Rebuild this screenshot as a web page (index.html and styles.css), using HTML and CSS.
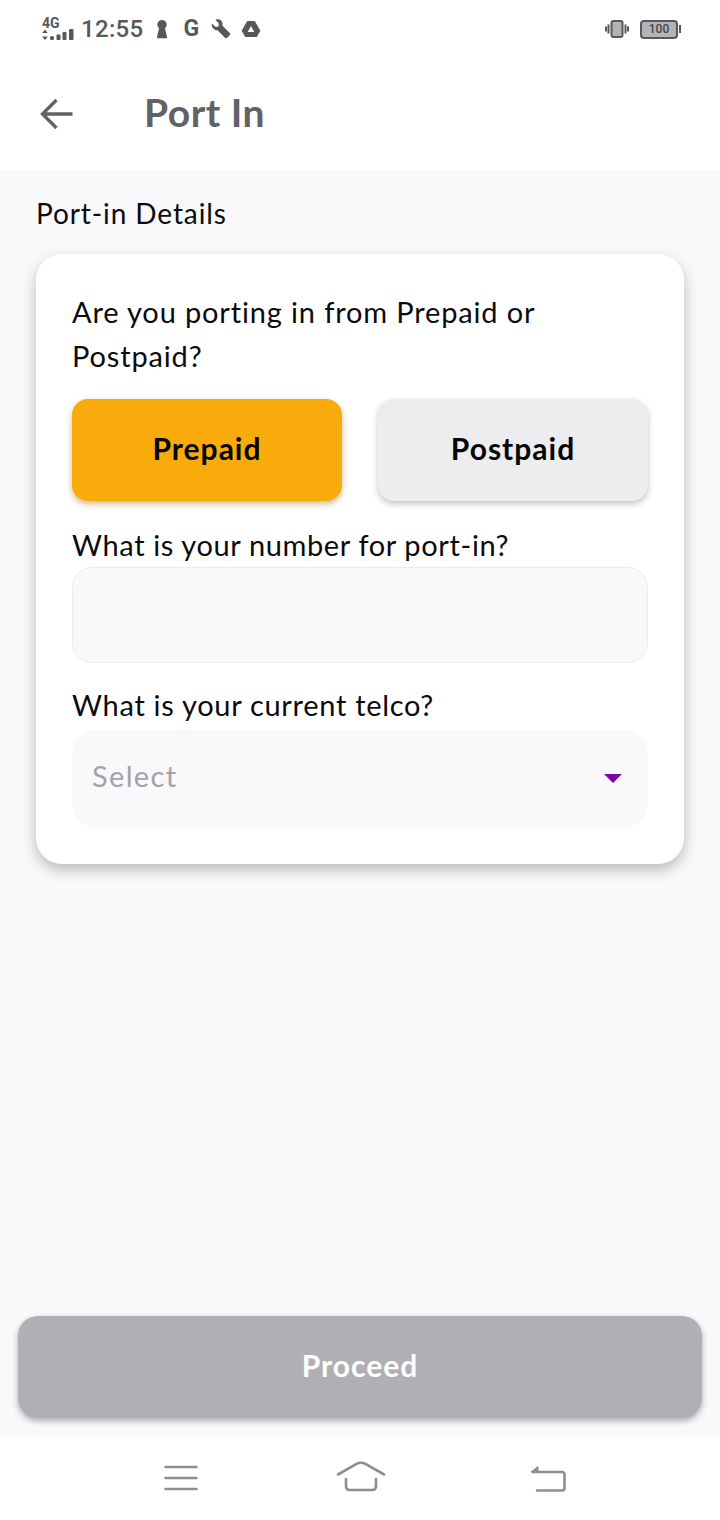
FILE: index.html
```html
<!DOCTYPE html>
<html lang="en">
<head>
<meta charset="utf-8">
<title>Port In</title>
<link rel="stylesheet" href="styles.css">
</head>
<body>
<div class="app">
  <header class="top">
    <div class="status">
      <div class="status-left">
        <div class="net">
          <span class="net-label">4G</span>
          <svg class="net-bars" width="33" height="13" viewBox="0 0 33 13"><path d="M3 1.500 5.800 5H.2zM3 12 .2 8.500h5.600z" fill="#58575c"/><rect x="8" y="8" width="4" height="4" rx="1.500" fill="#58575c"/><rect x="14.500" y="6.500" width="4" height="5.500" rx="1" fill="#58575c"/><rect x="20.500" y="4" width="4" height="8" rx="1" fill="#58575c"/><rect x="27" y="1" width="4.500" height="11" rx="1" fill="#58575c"/></svg>
        </div>
        <span class="clock">12:55</span>
        <svg class="si si-key" width="14" height="20" viewBox="0 0 14 20"><path d="M7 1a4.700 4.700 0 0 1 3 8.300L12 18a1 1 0 0 1-1 1.200H3A1 1 0 0 1 2 18L4 9.300A4.700 4.700 0 0 1 7 1z" fill="#58575c"/></svg>
        <span class="si-g">G</span>
        <svg class="si si-wrench" width="20" height="20" viewBox="0 0 20 20"><path d="M.8 4.500 4.800 8l2.600-.6.600-2.600L4.500.8C7.500-.5 11 1 11.500 4c.2 1 .1 1.800-.2 2.500l7.700 7.700c1.300 1.300-3.500 6-4.800 4.800L6.500 11.300C3.500 11.800 0 8 .8 4.500z" fill="#58575c"/></svg>
        <svg class="si si-drive" width="20" height="18" viewBox="0 0 20 18"><path d="M6.800 1h6.400a1 1 0 0 1 .9.500l5 8.800a1 1 0 0 1 0 1l-3 5.200a1 1 0 0 1-.9.500H4.800a1 1 0 0 1-.9-.5l-3-5.200a1 1 0 0 1 0-1l5-8.800a1 1 0 0 1 .9-.5zM10 6l-3.300 6h6.600z" fill="#58575c" fill-rule="evenodd"/></svg>
      </div>
      <div class="status-right">
        <svg width="24" height="20" viewBox="0 0 24 20"><rect x="6.500" y="2" width="11" height="16" rx="2" fill="#b4b3b7" stroke="#58575c" stroke-width="2"/><path d="M3.500 5.500v9M1 7.500v5M20.500 5.500v9M23 7.500v5" stroke="#58575c" stroke-width="2"/></svg>
        <div class="battery"><span class="battery-body">100</span><span class="battery-tip"></span></div>
      </div>
    </div>
    <div class="titlebar">
      <svg class="back" width="36" height="34" viewBox="0 0 36 34"><path d="M33.500 17H4M17.500 3 3.500 17l14 14" fill="none" stroke="#626166" stroke-width="3.400"/></svg>
      <h1 class="title">Port In</h1>
    </div>
  </header>

  <main class="content">
    <h2 class="section">Port-in Details</h2>
    <section class="card">
      <p class="q q-first">Are you porting in from Prepaid or Postpaid?</p>
      <div class="choices">
        <button class="choice choice-on">Prepaid</button>
        <button class="choice">Postpaid</button>
      </div>
      <label class="q q-num">What is your number for port-in?</label>
      <div class="field"></div>
      <label class="q q-telco">What is your current telco?</label>
      <div class="select"><span>Select</span><i class="caret"></i></div>
    </section>
    <div class="spacer"></div>
    <button class="proceed">Proceed</button>
  </main>

  <nav class="nav">
    <svg width="34" height="26" viewBox="0 0 34 26"><path d="M1.500 2h31M1.500 13h31M1.500 24h31" stroke="#8e8d91" stroke-width="2.600" stroke-linecap="round"/></svg>
    <svg class="nav-home" width="50" height="32" viewBox="0 0 50 32"><path d="M2 13.500 21 2.700q4-2 8 0L48 13.500" fill="none" stroke="#8e8d91" stroke-width="2.600" stroke-linecap="round"/><path d="M10 18v7q0 4 4 4h22q4 0 4-4v-7" fill="none" stroke="#8e8d91" stroke-width="2.600" stroke-linecap="round"/></svg>
    <svg width="36" height="28" viewBox="0 0 36 28"><path d="M3 8h29q2.500 0 2.500 2.500V24q0 2.500-2.500 2.500H7" fill="none" stroke="#8e8d91" stroke-width="2.600" stroke-linecap="round"/><path d="M1 8 8 2.500V8z" fill="#8e8d91" stroke="#8e8d91" stroke-width="1" stroke-linejoin="round"/></svg>
  </nav>
</div>
</body>
</html>
```
FILE: styles.css
```css
* { box-sizing: border-box; }
html, body { margin: 0; padding: 0; }
body { font-family: "Lato", "Liberation Sans", sans-serif; color: #0b0b0d; background: #f9f8fa; }
.app { width: 720px; height: 1520px; display: flex; flex-direction: column; overflow: hidden; }

.top { background: #fff; height: 170px; flex: none; }
.status { height: 58px; display: flex; justify-content: space-between; align-items: center; padding: 0 39px 0 42px; }
.status-left, .status-right { display: flex; align-items: center; }
.net { width: 33px; display: flex; flex-direction: column; }
.net-label { font: 700 14px/11px "Roboto", sans-serif; color: #58575c; }
.net-bars { display: block; margin-top: -1px; }
.clock { font: 500 24px/28px "Roboto", sans-serif; color: #58575c; margin-left: 6px; letter-spacing: .3px; }
.si { display: block; }
.si-key { margin-left: 12px; }
.si-g { font: 700 23px/24px "Roboto", sans-serif; color: #58575c; margin-left: 14px; }
.si-wrench { margin-left: 12px; }
.si-drive { margin-left: 10px; }
.status-right svg { display: block; margin-right: 11px; }
.battery { display: flex; align-items: center; }
.battery-body { width: 38px; height: 19px; border: 2px solid #58575c; border-radius: 4px; background: #b4b3b7; font: 500 12px/15px "Roboto", sans-serif; color: #47464b; text-align: center; }
.battery-tip { width: 2px; height: 8px; background: #58575c; margin-left: 1px; }

.titlebar { height: 112px; display: flex; align-items: flex-start; padding: 39px 0 0 39px; }
.back { display: block; }
.title { margin: -8px 0 0 69px; font: 700 39px/46px "Lato", sans-serif; letter-spacing: .5px; color: #626166; }

.content { flex: 1; min-height: 0; display: flex; flex-direction: column; padding: 26px 18px 18px; }
.section { margin: 0 0 0 18px; font: 400 28px/34px "Lato", sans-serif; letter-spacing: .9px; height: 58px; color: #0b0b0d; }
.card { margin: 0 18px; height: 610px; padding: 36px 36px 0; background: #fff; border-radius: 26px; box-shadow: 0 6px 14px rgba(70, 68, 76, .34); display: block; }
.q { display: block; margin: 0; font: 400 29px/44px "Lato", sans-serif; letter-spacing: .85px; color: #0b0b0d; }
.q-first { width: 520px; }
.choices { display: flex; justify-content: space-between; margin-top: 21px; }
.choice { width: 270px; height: 102px; border: 0; border-radius: 16px; background: #edecef; font: 700 30px/34px "Lato", sans-serif; letter-spacing: 1px; color: #060606; box-shadow: 0 3px 6px rgba(60, 58, 66, .3); padding: 0 0 5px; }
.choice-on { background: #f9ab0c; box-shadow: 0 3px 6px rgba(150, 100, 10, .45); }
.q-num { margin-top: 22px; letter-spacing: .62px; }
.field { height: 96px; background: #f9f8fa; border: 1px solid #ecebef; border-radius: 20px; }
.q-telco { margin-top: 20px; letter-spacing: .7px; }
.select { height: 98px; margin-top: 3px; background: #f9f8fa; border-radius: 24px; display: flex; align-items: center; justify-content: space-between; padding: 0 26px 7px 20px; font: 400 29px/34px "Lato", sans-serif; letter-spacing: 1.35px; color: #a3a2a6; }
.caret { width: 0; height: 0; margin-top: 5px; border-left: 9px solid transparent; border-right: 9px solid transparent; border-top: 9px solid #7f00a8; }
.spacer { flex: 1; }
.proceed { height: 102px; border: 0; border-radius: 20px; background: #b1afb3; color: #fff; font: 700 30px/34px "Lato", sans-serif; letter-spacing: 1px; box-shadow: 0 3px 6px rgba(60, 58, 66, .4); padding: 0 0 5px; }

.nav { height: 84px; flex: none; background: #fff; display: flex; align-items: center; padding: 0 154px 0 164px; justify-content: space-between; }
.nav svg { display: block; }
.nav-home { margin: -2px 0 0 -6px; }
```
